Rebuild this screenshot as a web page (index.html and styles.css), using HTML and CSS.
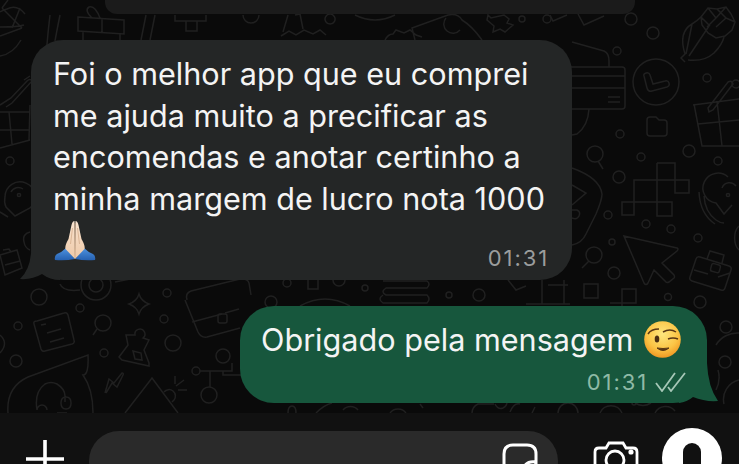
FILE: index.html
```html
<!DOCTYPE html>
<html lang="pt-BR">
<head>
  <meta charset="UTF-8">
  <meta name="viewport" content="width=device-width, initial-scale=1.0">
  <title>Conversa</title>
  <link rel="stylesheet" href="styles.css">
</head>
<body>

  <div class="chat">
    <svg class="wallpaper" width="739" height="413" viewBox="0 0 739 413" fill="none">
      <!-- top right -->
      <circle cx="547" cy="19" r="4"/><circle cx="631" cy="19" r="6"/><circle cx="653" cy="33" r="6"/>
      <circle cx="617" cy="51" r="4"/><circle cx="707" cy="78" r="4"/><circle cx="620" cy="134" r="4"/>
      <path d="M578 14l6 11 20-9M572 42l32 9q5 2 5 10v6"/>
      <path d="M570 67h52q3 0 3 3v36q0 3-3 3h-52M570 76h55M570 88h55M608 97h12M608 102h12"/>
      <path d="M589 109q-1 17-12 25l-5 1"/>
      <circle cx="656" cy="82" r="23"/>
      <path d="M644 76l3 12q1 4 5 3l15-4q3-1 2-4q-1-3-4-2l-12 3-3-9q-1-3-4-2q-3 1-2 3z"/>
      <path d="M647 120q0-3 3-3h6l3 3h5q3 0 3 3v10q0 3-3 3h-14q-3 0-3-3z"/>
      <path d="M685 62l-4-4 4-4q-7-22 7-30 5-3 9-7M688 60q16 2 26-7 8-8 10-16M686 54l6-30M689 56l20-30"/>
      <path d="M701 17l7-9 9 1 9-2 5 7 4 8-3 8-7 6-9 2-8-5-6-8zM708 8l8 10-9 9M717 9l9 9-10 9M701 17l9 9M726 7l-10 11M735 22l-9-4"/>
      <path d="M694 104l8 42h37M693 105l46-6M708 108l20-26q4-2 5 2l-20 26-4 2zM717 101l5 45M698 124l41-4"/>
      <circle cx="736" cy="84" r="4"/>
      <!-- right column -->
      <circle cx="595" cy="154" r="8"/><path d="M598 161l5 8"/>
      <circle cx="641" cy="157" r="4"/><circle cx="689" cy="151" r="6"/><circle cx="718" cy="161" r="4"/><circle cx="619" cy="177" r="6"/>
      <path d="M572 168q28 10 30 26q0 6-6 20l-10 20q-4 9-14 11M572 185l14 8-14 12M572 210h5q4 2 2 6t-7 2"/>
      <path d="M657 163h18v30h14v-13h-55v22M657 163v53h15v-14h-50v13h12v-13"/>
      <circle cx="608" cy="215" r="4"/><circle cx="646" cy="224" r="4"/><circle cx="671" cy="229" r="4"/><circle cx="698" cy="238" r="4"/><circle cx="612" cy="242" r="3"/>
      <path d="M624 236l53 12q2 1 0 3l-15 12 12 12q1 2 0 3l-5 4q-2 1-3 0l-12-12-6 13q-2 3-4 0z"/>
      <path d="M728 177a15 15 0 1 0-12 26l8 11 8-9M722 188a8 8 0 0 1 14-2M704 196q1 16 12 24 4 3 8 3M699 192q1 22 16 32"/>
      <circle cx="728" cy="195" r="1.6"/>
      <path d="M739 226a9 14 0 0 0 0 24"/>
      <circle cx="594" cy="255" r="8"/><path d="M589 261l-7 7"/>
      <circle cx="614" cy="273" r="6"/><circle cx="668" cy="297" r="3.5"/><circle cx="700" cy="302" r="6"/>
      <path d="M700 257l29 9q3 1 2 4l-6 18q-1 3-4 2l-29-9q-3-1-2-4l6-18q1-3 4-2zM707 259l3-8 14 4-2 8M694 270l14 4M718 277l12-4"/>
      <rect x="711" y="264" width="9" height="8" rx="2" transform="rotate(15 715 268)"/>
      <path d="M584 284h14v14h-14zM622 289h14v14h-14zM622 303v5M610 303h12"/>
      <!-- left column -->
      <path d="M25 14q-8-10-18-5q-4 1-7 3M24 25q-6 2-24 2M21 40q-8 14-21 16M2 8l20 20M20 8l-8 20M0 36l22-8M8 0l-6 8"/>
      <path d="M50 15q-3 25-5 55M60 15q-4 20-5 26"/>
      <path d="M78 17l46 3v14l-46-3zM83 31v9M120 34v6M102 18v15M92 18q-8-8-3-11q6-2 11 11"/>
      <path d="M146 15l-5 25M155 15l-5 25M175 15v6h31v-6M186 21v10h11v-10"/>
      <path d="M0 105l11-7 16-17q3-3 5 0l-20 22-6 4M24 80l6-4"/>
      <path d="M0 112h30M9 112l3 32M0 130h30M0 148l30-8M30 105l-1 35"/>
      <circle cx="10" cy="161" r="4"/>
      <path d="M5 197a15 15 0 1 1 25 11l-15 8-9-9a15 15 0 0 1-1-10zM11 192a8 8 0 0 1 12-3"/>
      <circle cx="19" cy="195" r="1.6"/>
      <path d="M0 212l8 5M30 232q-8 2-6 10q1 6 6 8"/>
      <path d="M0 255l17-5 5 18-17 7zM3 250l6-1 2 3M5 265l15-4"/>
      <!-- bottom left -->
      <circle cx="39" cy="297" r="8"/><circle cx="80" cy="308" r="4"/><circle cx="18" cy="326" r="4"/><circle cx="16" cy="361" r="6"/><circle cx="104" cy="353" r="4"/>
      <circle cx="167" cy="293" r="4"/><circle cx="164" cy="319" r="4"/><circle cx="173" cy="343" r="8"/>
      <circle cx="96" cy="285" r="15"/><circle cx="96" cy="285" r="7"/>
      <path d="M60 284q3 8 20 6M115 282l15-3"/>
      <path d="M37 321l27-8q3-1 4 2l6 25q1 3-2 4l-27 7q-3 1-4-2l-7-25q-1-3 3-3zM41 325l5-1M47 333l14-4M50 342l14-4"/>
      <circle cx="103" cy="323" r="8"/><path d="M97 329l-4 6"/>
      <path d="M139 294q2 7 10 10q-8 3-10 10q-2-7-10-10q8-3 10-10z"/>
      <path d="M135 335a5 5 0 1 1 8 3l6 2-5 10 5 13v3l-27-6-3-3 9-12-2-10zM133 351l8 2 1 7-7-1z"/>
      <path d="M0 335q9 8 0 18"/>
      <path d="M8 413q-2-26 20-36l60-22q1 20-5 20 10 14 10 38M37 410q-3-18 8-26q6-3 12 0q8 5 8 12v6M37 410a5 5 0 0 1 10 0M66 397q5 0 5 6t-5 6-5-6 5-6zM57 413h10"/>
      <path d="M105 393l4-14 5 4 8-10q2 0 1 2l-6 12-5-4-6 10"/>
      <path d="M125 413l27-35 26 35M175 376v8M184 380l-8 6M187 390h-9"/>
      <path d="M164 392a6 6 0 0 1 10 8l-2 2"/>
      <!-- briefcase and network -->
      <path d="M187 300q-2-7 4-9l49-12q7-1 9 4l2 12M185 300l13 32q3 6 9 5l33-9M192 322l30-8M239 309l-14 4"/>
      <rect x="218" y="314" width="9" height="9" rx="2"/>
      <path d="M208 278v-6l14-3v5"/>
      <circle cx="223" cy="356" r="7"/><circle cx="196" cy="371" r="4"/><circle cx="209" cy="395" r="8"/>
      <path d="M200 371h32v-8M210 371v16M223 371v4h20"/>
      <!-- strip between bubbles -->
      <circle cx="271" cy="302" r="6"/><circle cx="287" cy="283" r="4"/><circle cx="365" cy="288" r="3"/><circle cx="449" cy="295" r="3"/><circle cx="479" cy="295" r="6"/>
      <path d="M308 280v9h10v-9M333 280a6 6 0 0 0 12 0"/>
      <path d="M300 306q25-14 50 0M383 281h44q4 3 0 7h-41q-6 4 0 7h41q4 4 0 8h-44q-6-4 0-8M526 304h44M542 280v24h22v-24M548 285h20"/>
      <path d="M508 280l8 10 10-4"/>
      <!-- strip under bubbles -->
      <path d="M288 413q0-7 4-7t4 7M316 413q8-8 16-10M343 410a10 10 0 0 1 15 0M390 413a10 10 0 0 1 16 0M420 404l3 4M472 413q0-6 6-9h16M495 404q3 6 8 4 4-2 4-6M510 412q4-10 10-8M535 407l-3 6M558 413a10 10 0 0 1 20 0M600 413a12 12 0 0 1 22 0M635 403q8 5 16 0M655 413a12 12 0 0 1 20-2"/>
      <circle cx="634" cy="403" r="2"/>
      <!-- far right bottom -->
      <circle cx="726" cy="327" r="6"/>
      <circle cx="725" cy="362" r="6"/>
      <path d="M716 345a25 25 0 0 1 23-12M718 370q3 10-2 20M739 380a20 20 0 0 0-15 24"/>
      <!-- under the top bubble -->
      <path d="M243 15a8 8 0 1 0 16 0M281 36l8-5 7 4 8-5 9 4 7-4 6 5M283 32l5-17M295 15l5-1 3 15M330 14a5 5 0 1 0 .1 0M355 15q20 10 40 0M385 40q3-6 8-6l3-4 8 3 6-3 6 5 6 2M415 40l-3-12 36-13q10-2 14 5 10 6 20 20M446 18a8 8 0 0 0 14 12"/>
      <path d="M488 15l3 3 13-3 5 4-2 4 6 2-8 7-5-3-7 3 1-6-7-6zM550 15l3 6 14-6"/>
      <circle cx="522" cy="19" r="3"/>
    </svg>

    <div class="top-bubble"></div>

    <div class="msg msg-in">
      <svg class="tail tail-in" width="40" height="40" viewBox="0 0 40 40"><path d="M11 0Q13 27 0 39Q12 40 22 34Q30 40 40 40V0Z"/></svg>
      <p class="msg-text">Foi o melhor app que eu comprei<br>me ajuda muito a precificar as<br>encomendas e anotar certinho a<br>minha margem de lucro nota 1000</p>
      <div class="msg-foot">
        <svg class="pray" width="42" height="42" viewBox="0 0 42 42">
          <defs>
            <linearGradient id="sleeve" x1="0" y1="0" x2="0" y2="1">
              <stop offset="0" stop-color="#4f93e0"/>
              <stop offset="1" stop-color="#2560b0"/>
            </linearGradient>
            <linearGradient id="skin" x1="0" y1="0" x2="0" y2="1">
              <stop offset="0" stop-color="#f9e4d0"/>
              <stop offset="1" stop-color="#eec9a8"/>
            </linearGradient>
          </defs>
          <path d="M1 40q-1-4 2-6 5-2 9-6l9 11q-10 2-20 1zM41 40q1-4-2-6-5-2-9-6l-9 11q10 2 20 1z" fill="url(#sleeve)"/>
          <path d="M20.5 1q-2 0-3 4l-3 14q-4 7-3 10l9.500 10z" fill="url(#skin)"/>
          <path d="M21.500 1q2 0 3 4l3 14q4 7 3 10l-9.500 10z" fill="url(#skin)"/>
          <path d="M21 3v35M18.500 8l-2 16M23.500 8l2 16" stroke="#d4ad8c" stroke-width=".8" fill="none"/>
        </svg>
        <span class="time">01:31</span>
      </div>
    </div>

    <div class="msg msg-out">
      <svg class="tail tail-out" width="40" height="40" viewBox="0 0 40 40"><path d="M28 0Q29 24 39 38Q26 39 14 34Q8 39 0 40V0Z"/></svg>
      <p class="msg-line">Obrigado pela mensagem
        <svg class="wink" width="37" height="37" viewBox="0 0 37 37">
          <defs>
            <radialGradient id="face" cx=".5" cy=".35" r=".7">
              <stop offset="0" stop-color="#fde67e"/>
              <stop offset=".6" stop-color="#fbc445"/>
              <stop offset="1" stop-color="#ee8f1c"/>
            </radialGradient>
          </defs>
          <circle cx="18.5" cy="18.5" r="18.3" fill="url(#face)"/>
          <ellipse cx="13" cy="18" rx="2.3" ry="3.6" fill="#4a2d12"/>
          <path d="M4 13q3-5 11-5M19 11q7-4 13 0M24 18q5-2 10 0" stroke="#5a3713" stroke-width="1.5" fill="none"/>
          <path d="M13 27q6 5 12 0q-6 1-12 0z" fill="#5a3713" stroke="#5a3713"/>
        </svg>
      </p>
      <div class="msg-status">
        <span class="time">01:31</span>
        <svg class="checks" width="31" height="20" viewBox="0 0 31 20" fill="none" stroke="#a6c7b7" stroke-width="1.8">
          <path d="M1 11l6 8L20 1M13 15l3 4L30 1"/>
        </svg>
      </div>
    </div>
  </div>

  <div class="bar">
    <svg class="plus" width="38" height="38" viewBox="0 0 38 38"><path d="M19 0v38M0 19h38" stroke="#fff" stroke-width="3.6"/></svg>
    <div class="field">
      <svg class="sticker" width="36" height="36" viewBox="0 0 36 36" fill="none" stroke="#fff" stroke-width="3">
        <path d="M11 2h14q9 0 9 9v10L20 34h-9q-9 0-9-9V11q0-9 9-9zM34 19q-14-2-14 15"/>
      </svg>
    </div>
    <svg class="camera" width="46" height="40" viewBox="0 0 46 40" fill="none" stroke="#fff" stroke-width="2.8">
      <path d="M6 8h7l3-5h14l3 5h7q4 0 4 4v28H2V12q0-4 4-4z"/>
      <circle cx="22" cy="20" r="9"/>
      <circle cx="38" cy="12" r="1.2" fill="#fff"/>
    </svg>
    <div class="mic">
      <svg width="18" height="30" viewBox="0 0 18 30">
        <rect width="18" height="30" rx="9" fill="#111"/>
      </svg>
    </div>
  </div>

</body>
</html>
```

FILE: styles.css
```css
html, body {
  height: 100%;
}

body {
  margin: 0;
  background-color: #111;
  font-family: Inter, "Liberation Sans", sans-serif;
  overflow: hidden;
}

.chat {
  position: relative;
  height: 413px;
  background-color: #0a0a0a;
  display: flex;
  flex-direction: column;
  overflow: hidden;
}

.wallpaper {
  position: absolute;
  top: 0;
  left: 0;
  stroke: #202020;
  stroke-width: 1.5;
}

.top-bubble {
  position: relative;
  height: 14px;
  margin: 0 104px 26px 105px;
  background-color: #1b1b1b;
  border-radius: 0 0 12px 12px;
}

.msg {
  position: relative;
  box-sizing: border-box;
}

.msg-in {
  width: 541px;
  height: 240px;
  margin-left: 31px;
  padding: 13px 23px 0 22px;
  background-color: #242626;
  border-radius: 32px;
  color: #f4f4f4;
}

.msg-out {
  width: 467px;
  height: 97px;
  margin: 26px 0 0 240px;
  padding: 13px 23px 0 21px;
  background-color: #17573d;
  border-radius: 34px;
  color: #f4f4f4;
}

.tail {
  position: absolute;
  bottom: 0;
}

.tail-in {
  left: -11px;
  fill: #242626;
}

.tail-out {
  right: -12px;
  fill: #17573d;
}

.msg-text,
.msg-line {
  position: relative;
  margin: 0;
  font-size: 30.6px;
  line-height: 41.6px;
  white-space: nowrap;
}

.msg-line {
  display: flex;
  align-items: center;
  gap: 11px;
}

.msg-foot {
  position: relative;
  display: flex;
  justify-content: space-between;
  align-items: flex-end;
  margin-top: 1px;
}

.pray {
  margin-left: 1px;
}

.msg-status {
  position: relative;
  display: flex;
  justify-content: flex-end;
  align-items: center;
  gap: 7px;
  margin-top: 8px;
}

.checks {
  margin-right: -2px;
}

.time {
  font-size: 22px;
  letter-spacing: 1.9px;
  color: #9b9d9d;
}

.msg-foot .time {
  margin-bottom: -9px;
}

.msg-out .time {
  color: #8fbaa6;
}

.bar {
  height: 51px;
  display: flex;
  align-items: flex-start;
  padding-left: 26px;
  overflow: hidden;
}

.plus {
  flex: none;
  margin-top: 27px;
}

.field {
  flex: none;
  position: relative;
  box-sizing: border-box;
  width: 469px;
  height: 60px;
  margin: 18px 0 0 25px;
  background-color: #2a2a2a;
  border-radius: 30px;
}

.sticker {
  position: absolute;
  top: 12px;
  right: 20px;
}

.camera {
  flex: none;
  margin: 27px 0 0 35px;
}

.mic {
  flex: none;
  display: flex;
  justify-content: center;
  box-sizing: border-box;
  width: 60px;
  height: 60px;
  margin: 15px 0 0 23px;
  padding-top: 15px;
  background-color: #fff;
  border-radius: 50%;
}
```
